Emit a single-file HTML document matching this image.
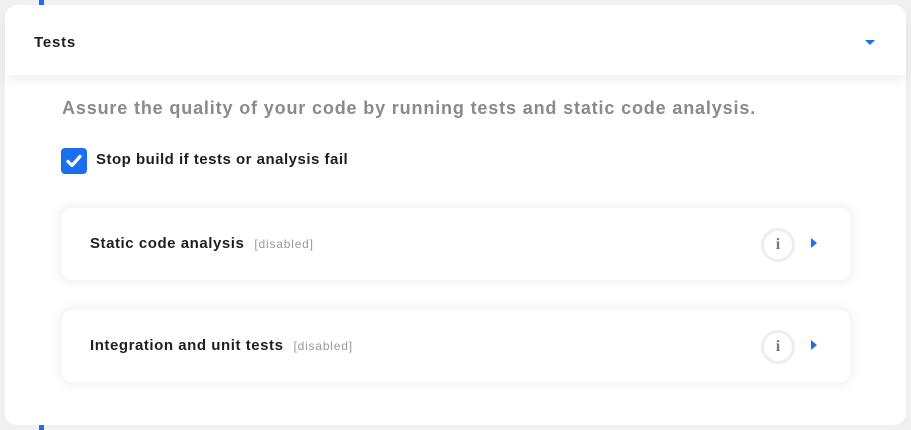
<!DOCTYPE html>
<html><head><style>
body{margin:0;width:911px;height:430px;background:#f0f0f0;font-family:"Liberation Sans",sans-serif;position:relative;overflow:hidden}
.bl{position:absolute;left:39px;width:5px;background:#1a6ef0}
.card{position:absolute;left:5px;top:5px;width:901px;height:420px;background:#fff;border-radius:12px}
.hdr{position:absolute;left:0;top:0;width:901px;height:70px;box-shadow:0 6px 10px rgba(0,0,0,0.05);border-radius:12px 12px 0 0;background:#fff}
.ttl{position:absolute;left:29px;top:29px;font-weight:bold;font-size:15px;color:#1e1e28;letter-spacing:0.8px}
.chev{position:absolute;left:860px;top:35px;width:0;height:0;border-left:5px solid transparent;border-right:5px solid transparent;border-top:5px solid #1a6ef0}
.desc{position:absolute;left:62px;top:98px;font-size:18px;letter-spacing:0.85px;font-weight:bold;color:#8a8a8a}
.cb{position:absolute;left:61px;top:148px;width:26px;height:26px;background:#1a6ef0;border-radius:4px}
.cbl{position:absolute;left:96px;top:151px;font-size:15px;font-weight:bold;color:#1e1e28;letter-spacing:0.5px}
.row{position:absolute;left:62px;width:788px;height:72px;background:#fff;border-radius:10px;box-shadow:0 0 10px 4px rgba(0,0,0,0.05)}
.rt{position:absolute;left:28px;top:27px;font-size:15px;font-weight:bold;color:#1e1e28;letter-spacing:0.55px}
.rt span{font-weight:normal;font-size:12px;color:#999;margin-left:10px;letter-spacing:0.8px}
.info{position:absolute;left:699px;top:20px;width:28px;height:28px;border:3px solid #eee;border-radius:50%;text-align:center;line-height:28px;font-weight:bold;font-family:"Liberation Serif",serif;color:#777;font-size:16px}
.ar{position:absolute;left:749px;top:30px;width:0;height:0;border-top:5px solid transparent;border-bottom:5px solid transparent;border-left:6px solid #1a6ef0}
</style></head><body>
<div class="bl" style="top:0;height:5px"></div>
<div class="bl" style="top:425px;height:5px"></div>
<div class="card">
<div class="hdr"><div class="ttl">Tests</div><div class="chev"></div></div>
</div>
<div class="desc">Assure the quality of your code by running tests and static code analysis.</div>
<div class="cb"><svg width="26" height="26" viewBox="0 0 26 26"><path d="M7 13.5l4 4 8-9" fill="none" stroke="#fff" stroke-width="3.2" stroke-linecap="round" stroke-linejoin="round"/></svg></div>
<div class="cbl">Stop build if tests or analysis fail</div>
<div class="row" style="top:208px"><div class="rt">Static code analysis<span>[disabled]</span></div><div class="info">i</div><div class="ar"></div></div>
<div class="row" style="top:310px"><div class="rt">Integration and unit tests<span>[disabled]</span></div><div class="info">i</div><div class="ar"></div></div>
</body></html>
